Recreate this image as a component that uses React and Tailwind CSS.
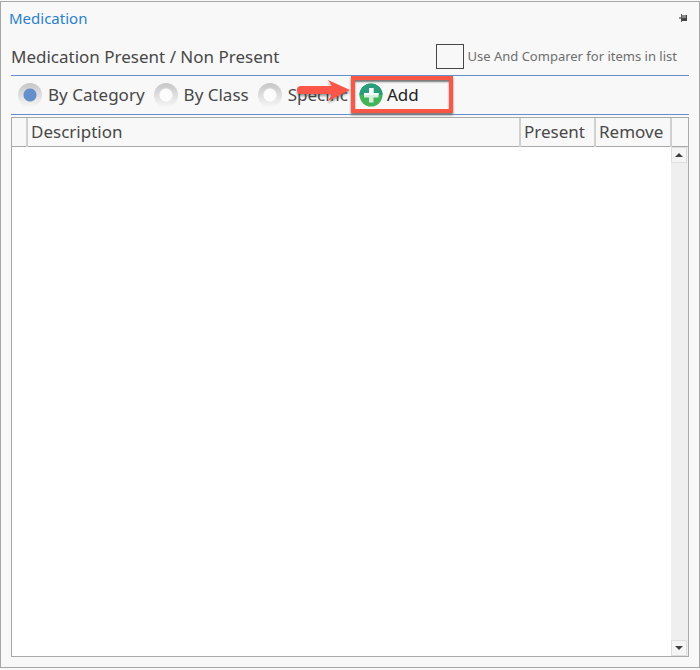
import React, { useState } from "react";

const modes = ["By Category", "By Class", "Specific"];

function PinIcon() {
  return (
    <svg width="8" height="8" viewBox="0 0 8 8" shapeRendering="crispEdges" aria-hidden="true">
      <path d="M0 3h2v2H0z" fill="#909090" />
      <path d="M2 0h1v8H2z" fill="#555" />
      <path d="M3 1h5v3H3z" fill="#8b8b8b" />
      <path d="M3 4h5v3H3zM7 1h1v6H7z" fill="#444" />
    </svg>
  );
}

function AddIcon() {
  return (
    <svg width="24" height="24" viewBox="0 0 24 24" aria-hidden="true">
      <circle cx="12" cy="12" r="11.5" fill="#43b35a" />
      <path d="M.5 12a11.5 11.5 0 0 1 23 0z" fill="#2b9d7c" />
      <path d="M10 5h4.500v5H19.500v4.500H14.500V19.500H10v-5H5V10h5z" fill="#d5efdd" />
      <path d="M10 5h4.500v5H19.500v2H5v-2h5z" fill="#f4faf7" />
    </svg>
  );
}

function ArrowCallout() {
  return (
    <svg className="absolute top-1 right-full" width="56" height="26" viewBox="0 0 56 26" aria-hidden="true">
      <defs>
        <filter id="arrow-shadow" x="-10%" y="-20%" width="120%" height="150%">
          <feDropShadow dx="0" dy="2" stdDeviation="1" floodColor="#333" floodOpacity="0.5" />
        </filter>
      </defs>
      <path
        d="M6 6Q2 6 2 10Q2 14 6 14H37L33 21L55 10L33 0L37 6z"
        fill="#fb5747"
        filter="url(#arrow-shadow)"
      />
    </svg>
  );
}

function ScrollButton({ down }) {
  return (
    <button
      type="button"
      aria-label={down ? "Scroll down" : "Scroll up"}
      className="flex h-4 w-full items-center justify-center border border-[#dedede] bg-[#f5f5f5]"
    >
      <svg width="8" height="4" viewBox="0 0 8 4" aria-hidden="true">
        <path d={down ? "M0 0h8L4 4z" : "M0 4h8L4 0z"} fill="#404040" />
      </svg>
    </button>
  );
}

export default function App() {
  const [mode, setMode] = useState(modes[0]);

  return (
    <div className="flex min-h-screen flex-col bg-[#f8f8f8] pt-px pb-0.5 font-['Noto_Sans','Open_Sans',sans-serif] text-[#484848]">
      <main className="flex flex-1 flex-col border border-[#a6a6a6] pr-2.5 pb-2.5 pl-2.5">
        <header className="flex h-8 items-center justify-between pr-0.5">
          <h1 className="-ml-0.5 text-[15px] text-[#2a80cc]">Medication</h1>
          <button type="button" aria-label="Pin panel">
            <PinIcon />
          </button>
        </header>

        <div className="flex h-[42px] items-center justify-between border-b border-[#6390cb] pt-1 pr-3">
          <h2 className="text-[17px]">Medication Present / Non Present</h2>
          <label className="flex items-center gap-1 text-[13px] text-[#6e6e6e]">
            <input type="checkbox" className="h-[25px] w-7 appearance-none border border-[#484848] bg-[#f8f8f8]" />
            Use And Comparer for items in list
          </label>
        </div>

        <div className="relative flex h-[39px] items-center border-b border-[#6390cb] pl-[7px] text-[17px] whitespace-nowrap">
          <div className="flex items-center gap-[9px]">
            {modes.map((name) => (
              <label key={name} className="flex items-center gap-1.5">
                <input
                  type="radio"
                  name="mode"
                  checked={mode === name}
                  onChange={() => setMode(name)}
                  className="size-6 appearance-none rounded-full bg-[radial-gradient(circle,#fcfcfc_6px,transparent_7px),linear-gradient(#c6c6c6,#f6f6f6)] checked:bg-[radial-gradient(circle,#6390cb_6px,transparent_7px),linear-gradient(#c6c6c6,#f6f6f6)]"
                />
                {name}
              </label>
            ))}
          </div>
          <div className="absolute top-0 left-[340px]">
            <button
              type="button"
              className="flex h-[37px] w-[102px] items-center gap-1 border-4 border-[#fb5747] bg-[#f8f8f8] pl-1 text-[#222] shadow-[0_2px_2px_#777,inset_0_2px_2px_#777]"
            >
              <AddIcon />
              Add
            </button>
            <ArrowCallout />
          </div>
        </div>

        <section className="mt-0.5 flex flex-1 flex-col border border-[#a9a9a9] bg-white">
          <table className="w-full table-fixed border-collapse bg-[#f8f8f8] text-[17px]">
            <thead>
              <tr className="h-7 border-b border-[#a9a9a9] text-left">
                <td className="w-[15px] border-r-2 border-[#d0d0d0]" />
                <th scope="col" className="border-r-2 border-[#d0d0d0] pl-[3px] leading-7 font-normal">Description</th>
                <th scope="col" className="w-[75px] border-r-2 border-[#d0d0d0] pl-[3px] leading-7 font-normal">Present</th>
                <th scope="col" className="w-[76px] border-r-2 border-[#d0d0d0] pl-[3px] leading-7 font-normal">Remove</th>
                <td className="w-[17px]" />
              </tr>
            </thead>
          </table>
          <div className="flex flex-1 justify-end">
            <div className="flex w-[17px] flex-col justify-between bg-[#efefef] pr-px">
              <ScrollButton />
              <ScrollButton down />
            </div>
          </div>
        </section>
      </main>
    </div>
  );
}
